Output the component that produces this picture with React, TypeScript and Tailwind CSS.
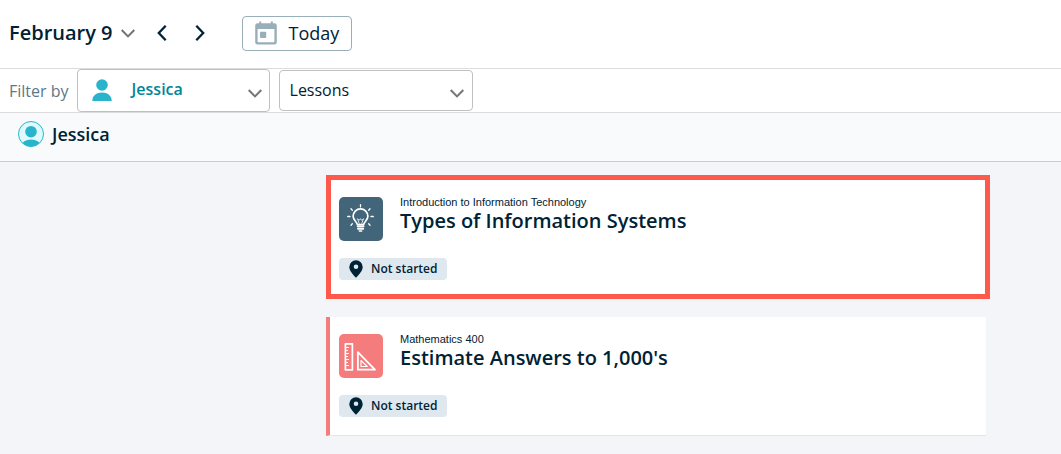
import React from 'react';

type Lesson = {
  id: number;
  course: string;
  title: string;
  status: string;
  icon: 'bulb' | 'geometry';
  highlighted: boolean;
};

const LESSONS: Lesson[] = [
  { id: 1, course: 'Introduction to Information Technology', title: 'Types of Information Systems', status: 'Not started', icon: 'bulb', highlighted: true },
  { id: 2, course: 'Mathematics 400', title: "Estimate Answers to 1,000's", status: 'Not started', icon: 'geometry', highlighted: false },
];

const Chevron: React.FC<{ className?: string }> = ({ className }) => (
  <svg viewBox="0 0 14 9" width="14" height="9" fill="none" stroke="currentColor" strokeWidth="2" className={className} aria-hidden="true">
    <path d="M0.7 1L7 7.4L13.3 1" />
  </svg>
);

const CalendarIcon = () => (
  <svg viewBox="0 0 22 24" width="22" height="24" aria-hidden="true">
    <path fill="#98afba" fillRule="evenodd" d="M4.200 0.500h2V2.200h9.600V0.500h2V2.200h1.700A2.300 2.300 0 0 1 21.800 4.500V21.300a2.300 2.300 0 0 1-2.300 2.300h-17A2.300 2.300 0 0 1 0.200 21.300V4.500A2.300 2.300 0 0 1 2.500 2.200h1.700zM2.600 8v12.500a0.800 0.800 0 0 0 0.800 0.800h15.200a0.800 0.800 0 0 0 0.800-0.800V8z" />
    <rect x="5" y="10.800" width="6.200" height="6.200" rx="0.800" fill="#98afba" />
  </svg>
);

const PersonIcon = () => (
  <svg viewBox="0 0 20 22" width="20" height="22" fill="#2ab4cc" aria-hidden="true">
    <circle cx="10" cy="6" r="5.8" />
    <path d="M0.300 22C0.300 16.500 4.500 13.500 10 13.500S19.700 16.500 19.700 22z" />
  </svg>
);

const Avatar = () => (
  <svg viewBox="0 0 26 26" width="26" height="26" aria-hidden="true">
    <clipPath id="avatar-clip">
      <circle cx="13" cy="13" r="12.500" />
    </clipPath>
    <circle cx="13" cy="13" r="12.500" fill="#dffaff" />
    <g fill="#2ab4cc" clipPath="url(#avatar-clip)">
      <circle cx="13" cy="10.700" r="5.800" />
      <ellipse cx="13" cy="24.500" rx="9.500" ry="6" />
    </g>
    <circle cx="13" cy="13" r="12.500" fill="none" stroke="#2ab4cc" />
  </svg>
);

const PinIcon = () => (
  <svg viewBox="0 0 14 18" width="14" height="18" fill="#002235" aria-hidden="true">
    <path fillRule="evenodd" d="M7 0.300a6.700 6.700 0 0 1 6.700 6.700C13.700 11 9.500 15 7 17.800C4.500 15 0.300 11 0.300 7A6.700 6.700 0 0 1 7 0.300zM7 4.500a2.300 2.300 0 1 0 0 4.600a2.300 2.300 0 0 0 0-4.600z" />
  </svg>
);

const BulbIcon = () => (
  <svg viewBox="0 0 44 44" width="44" height="44" fill="none" stroke="#fff" strokeLinecap="round" strokeLinejoin="round" className="shrink-0 rounded-[5px] bg-[#42657a]" aria-hidden="true">
    <path strokeWidth="1.700" d="M18.300 27.500C18.300 25 14.100 23.500 14.100 19.300a7.300 7.300 0 0 1 14.800 0C28.900 23.500 24.700 25 24.700 27.500z" />
    <path strokeWidth="2" d="M18.700 29.300h5.800M19 31.700h5.200" />
    <path strokeWidth="1.500" d="M20.300 34h2.400" />
    <path strokeWidth="1" strokeOpacity="0.800" d="M20.200 26.500l-1.700-4.800c1.500 2 2.500 1.500 3 0c0.500 1.500 1.500 2 3 0l-1.700 4.800" />
    <path strokeWidth="1.300" d="M21.500 7.600v2.300M12 11.800l1.300 1.400M31 11.800l-1.300 1.400M8.700 19.500h2.300M32 19.500h2.300M12 28.200l1.300-1.400M31 28.200l-1.300-1.400" />
  </svg>
);

const GeometryIcon = () => (
  <svg viewBox="0 0 44 44" width="44" height="44" fill="none" stroke="#fff" strokeLinejoin="round" className="shrink-0 rounded-[5px] bg-[#f47c7c]" aria-hidden="true">
    <path strokeWidth="1.700" d="M6.400 9.800h7v26H6.400z" />
    <path strokeWidth="1" d="M6.500 13.500h3.500M6.500 16.500h2.500M6.500 19.500h3.500M6.500 22.500h2.500M6.500 25.500h3.500M6.500 28.500h2.500M6.500 31.500h3.500" />
    <path strokeWidth="1.800" d="M18.900 18.200v17.500h17z" />
    <path strokeWidth="1.100" d="M22 26.500v6h6.300z" />
  </svg>
);

const LessonCard: React.FC<{ lesson: Lesson }> = ({ lesson }) => (
  <article
    className={
      lesson.highlighted
        ? 'border-5 border-[#ff594c] bg-white px-2 pt-[17px] pb-[14px]'
        : 'mr-1 border-b border-l-4 border-b-[#dfe6ec] border-l-[#f47c7c] bg-white px-[9px] pt-[17px] pb-[18px]'
    }
  >
    <div className="flex items-start gap-[17px]">
      {lesson.icon === 'bulb' ? <BulbIcon /> : <GeometryIcon />}
      <div>
        <p className="font-['Liberation_Sans',sans-serif] text-[11px] leading-[10px]">{lesson.course}</p>
        <h2 className="text-xl leading-7 font-semibold">{lesson.title}</h2>
      </div>
    </div>
    <div className="mt-[17px] flex h-[22px] w-fit items-center gap-2 rounded bg-[#dfe8ef] px-[10px] text-xs font-semibold">
      <PinIcon />
      {lesson.status}
    </div>
  </article>
);

export default function App() {
  return (
    <div className="min-h-screen bg-[#f3f5f9] font-['Open_Sans',sans-serif] text-[#002235]">
      <header className="flex h-[69px] items-center border-b border-[#dcdcdc] bg-white px-[9px] pb-0.5">
        <button type="button" className="flex items-center gap-2 text-xl font-semibold">
          February 9
          <Chevron className="text-[#757575]" />
        </button>
        <button type="button" aria-label="Previous day" className="ml-[22px]">
          <svg viewBox="0 0 10 16" width="10" height="16" fill="none" stroke="currentColor" strokeWidth="2.300">
            <path d="M8.700 0.800L1.800 8L8.700 15.200" />
          </svg>
        </button>
        <button type="button" aria-label="Next day" className="ml-7">
          <svg viewBox="0 0 10 16" width="10" height="16" fill="none" stroke="currentColor" strokeWidth="2.300">
            <path d="M1.300 0.800L8.200 8L1.300 15.200" />
          </svg>
        </button>
        <button type="button" className="ml-[37px] flex h-[35px] items-center gap-3 rounded border border-[#98afba] px-3 text-lg">
          <CalendarIcon />
          Today
        </button>
      </header>

      <div className="flex h-11 items-center border-b border-[#dcdcdc] bg-white px-[9px]">
        <label htmlFor="student" className="text-base text-[#5b7888]">Filter by</label>
        <div className="relative ml-2">
          <select id="student" defaultValue="jessica" className="h-[43px] w-[193px] appearance-none rounded border border-[#c0c0c0] bg-white pr-8 pb-1 pl-[50px] indent-1 text-base font-semibold text-[#008599]">
            <option value="jessica">Jessica</option>
          </select>
          <span className="pointer-events-none absolute top-[10px] left-[15px]">
            <PersonIcon />
          </span>
          <Chevron className="pointer-events-none absolute top-5 right-2 text-[#757575]" />
        </div>
        <div className="relative ml-[9px]">
          <select aria-label="Show" defaultValue="lessons" className="h-[41px] w-[194px] appearance-none rounded border border-[#c0c0c0] bg-white pr-8 pb-0.5 pl-[10px] text-base">
            <option value="lessons">Lessons</option>
          </select>
          <Chevron className="pointer-events-none absolute top-[19px] right-[9px] text-[#757575]" />
        </div>
      </div>

      <section className="flex h-[49px] items-start gap-2 border-b border-[#c3ced8] bg-[#f9fafc] px-[18px] pt-2">
        <Avatar />
        <h1 className="text-lg leading-[26px] font-semibold">Jessica</h1>
      </section>

      <main className="flex flex-col gap-[18px] pt-[13px] pr-[71px] pb-4 pl-[326px]">
        {LESSONS.map(lesson => (
          <LessonCard key={lesson.id} lesson={lesson} />
        ))}
      </main>
    </div>
  );
}
